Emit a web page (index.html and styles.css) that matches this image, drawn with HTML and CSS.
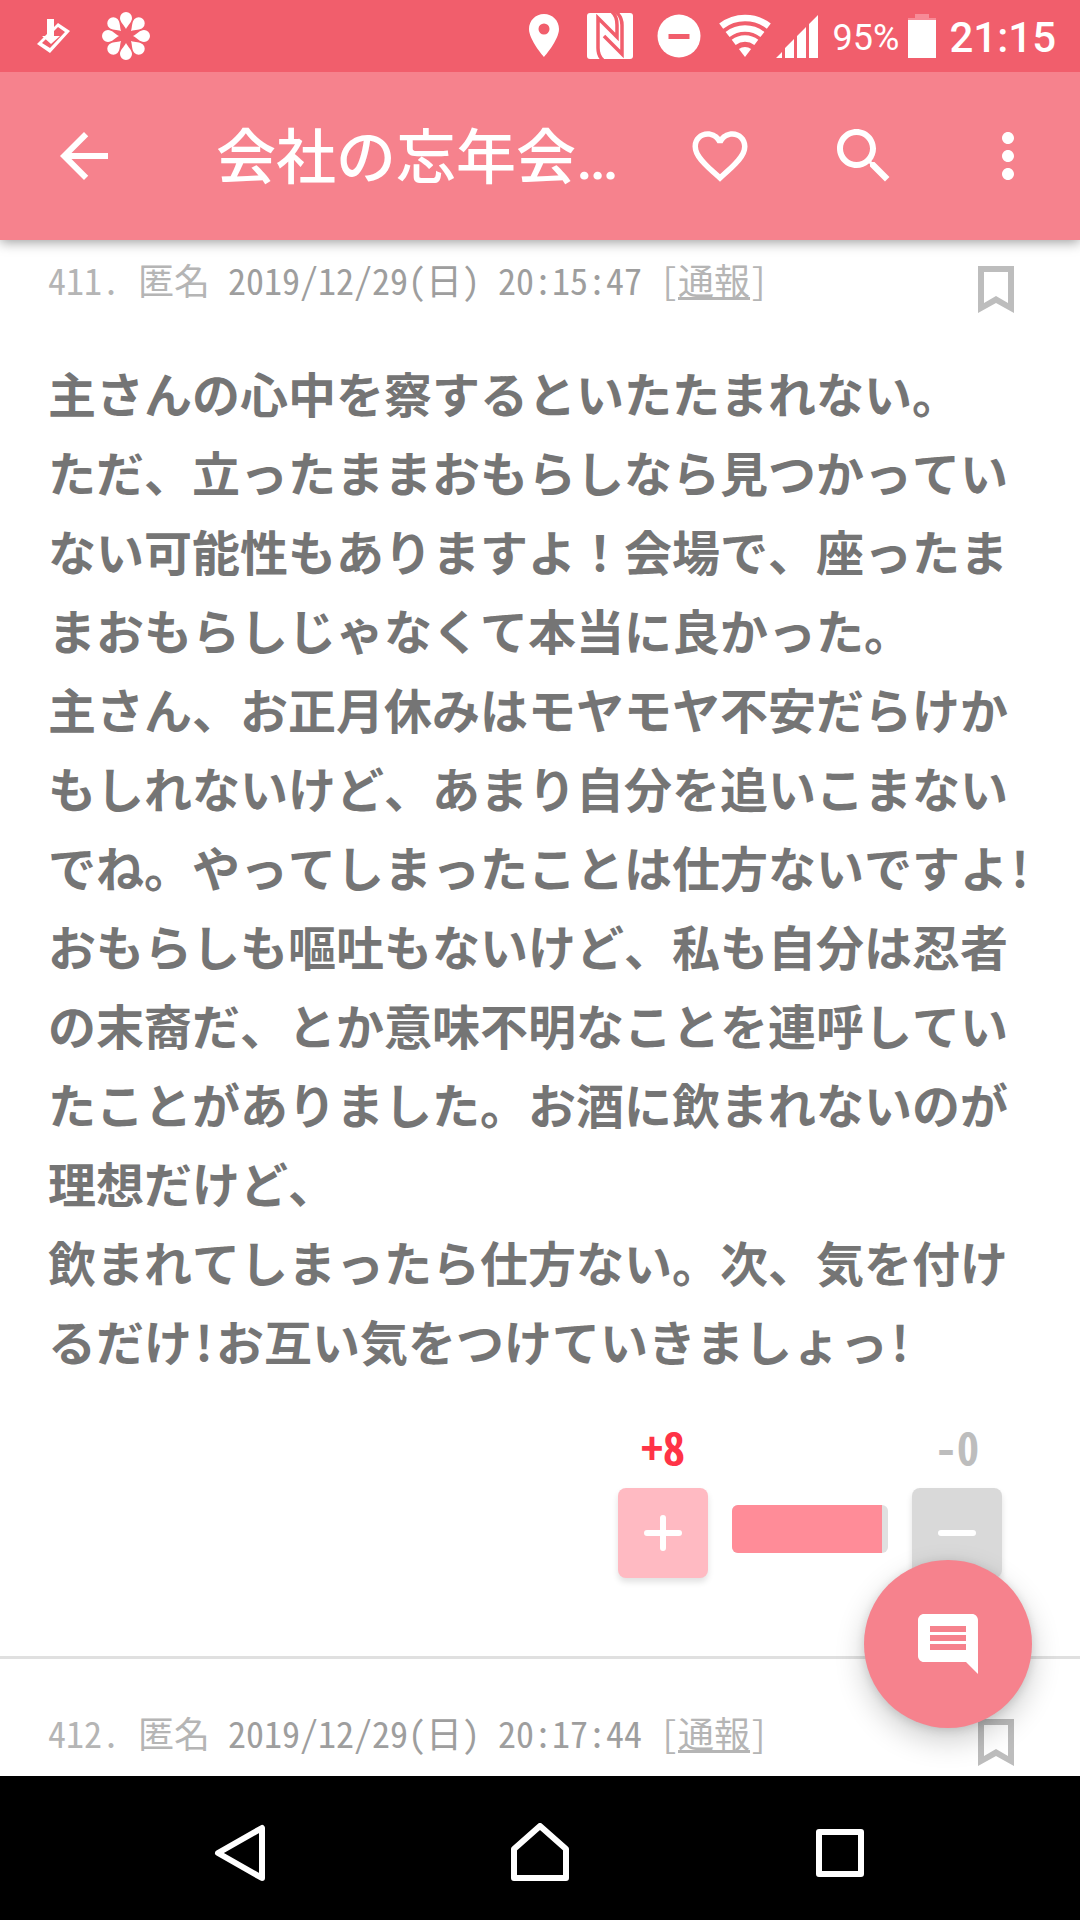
FILE: index.html
```html
<!DOCTYPE html>
<html lang="ja">
<head>
    <meta charset="UTF-8">
    <meta name="viewport" content="width=device-width, initial-scale=1">
    <title>会社の忘年会</title>
    <link rel="stylesheet" href="styles.css">
</head>
<body>
    <div class="status-bar">
        <div class="status-left">
            <svg width="36" height="36" viewBox="0 0 36 36">
                <path d="M22 5l12 8-20 22L1 26zM22 9L6 25l8 5 15-16z" fill="#fff" fill-rule="evenodd"/>
                <path d="M11 1h7v17h6l-9 8-9-8h5z" fill="#fff"/>
            </svg>
            <svg width="48" height="48" viewBox="-24 -24 48 48" fill="#fff">
                <g id="petals">
                    <path id="petal" d="M0-7C-2-11-6-14-6-18a6 6 0 0 1 12 0C6-14 2-11 0-7z"/>
                    <use href="#petal" transform="rotate(45)"/>
                    <use href="#petal" transform="rotate(90)"/>
                    <use href="#petal" transform="rotate(135)"/>
                </g>
                <use href="#petals" transform="rotate(180)"/>
            </svg>
        </div>
        <div class="status-right">
            <svg class="pin" width="30" height="44" viewBox="0 0 30 44">
                <path d="M15 0C6.500 0 0 6.700 0 15c0 11 15 28 15 28s15-17 15-28C30 6.700 23.500 0 15 0zm0 20.500a5.500 5.500 0 1 1 0-11 5.500 5.500 0 0 1 0 11z" fill="#fff"/>
            </svg>
            <svg class="nfc" width="46" height="46" viewBox="0 0 46 46">
                <rect width="46" height="46" rx="3" fill="#fff"/>
                <g fill="none" stroke="#f15e6c">
                    <path d="M16 47Q11 43 11 35V5L30 24V12Q30 3 25-1" stroke-width="3.500"/>
                    <path d="M29-1Q35 4 35 12V41L17 23" stroke-width="3.500"/>
                </g>
            </svg>
            <svg class="dnd" width="44" height="44" viewBox="0 0 44 44">
                <circle cx="22" cy="22" r="21.500" fill="#fff"/>
                <path d="M11.500 22.500h21" stroke="#f15e6c" stroke-width="5"/>
            </svg>
            <svg class="wifi" width="52" height="44" viewBox="-26 -43 52 44">
                <g fill="none" stroke="#fff" stroke-width="6.500">
                    <path d="M-23.800-30.900A39 39 0 0 1 23.800-30.900"/>
                    <path d="M-17.400-22.500A28.500 28.500 0 0 1 17.400-22.500"/>
                    <path d="M-11.300-14.600A18.500 18.500 0 0 1 11.300-14.600"/>
                </g>
                <path d="M0 0L-6.100-7.900A10 10 0 0 1 6.100-7.900z" fill="#fff"/>
            </svg>
            <svg class="signal" width="42" height="43" viewBox="0 0 42 43" fill="#fff">
                <path d="M0 43l6-6v6zM9 33l9-9v19H9zM21 21l9-9v31h-9zM33 9l9-9v43h-9z"/>
            </svg>
            <span class="battery-text">95%</span>
            <svg class="battery" width="28" height="44" viewBox="0 0 28 44">
                <path d="M7 0h14v4h7v3H0V4h7z" fill="#f78b97"/>
                <path d="M0 6h28v38H0z" fill="#fff"/>
            </svg>
            <span class="clock">21:15</span>
        </div>
    </div>

    <header class="app-bar">
        <button class="icon-btn" aria-label="戻る">
            <svg width="72" height="72" viewBox="0 0 24 24"><path d="M20 11H7.830l5.590-5.590L12 4l-8 8 8 8 1.410-1.410L7.830 13H20v-2z"/></svg>
        </button>
        <h1 class="title">会社の忘年会…</h1>
        <button class="icon-btn" aria-label="お気に入り">
            <svg width="66" height="66" viewBox="0 0 24 24"><path d="M16.500 3c-1.740 0-3.410.810-4.500 2.090C10.910 3.810 9.240 3 7.500 3 4.420 3 2 5.420 2 8.500c0 3.780 3.400 6.860 8.550 11.540L12 21.350l1.450-1.320C18.600 15.360 22 12.280 22 8.500 22 5.420 19.580 3 16.500 3zm-4.400 15.550l-.1.100-.1-.1C7.140 14.240 4 11.390 4 8.500 4 6.500 5.500 5 7.500 5c1.540 0 3.040.990 3.570 2.360h1.870C13.460 5.990 14.960 5 16.500 5c2 0 3.500 1.500 3.500 3.500 0 2.890-3.140 5.740-7.900 10.050z"/></svg>
        </button>
        <button class="icon-btn" aria-label="検索">
            <svg width="72" height="72" viewBox="0 0 24 24"><path d="M15.500 14h-.790l-.280-.270C15.410 12.590 16 11.110 16 9.500 16 5.910 13.090 3 9.500 3S3 5.910 3 9.500 5.910 16 9.500 16c1.610 0 3.090-.590 4.230-1.570l.270.280v.790l5 4.990L20.490 19l-4.990-5zm-6 0C7.010 14 5 11.990 5 9.500S7.010 5 9.500 5 14 7.010 14 9.500 11.990 14 9.500 14z"/></svg>
        </button>
        <button class="icon-btn" aria-label="メニュー">
            <svg width="72" height="72" viewBox="0 0 24 24"><path d="M12 8c1.100 0 2-.9 2-2s-.9-2-2-2-2 .9-2 2 .9 2 2 2zm0 2c-1.100 0-2 .9-2 2s.9 2 2 2 2-.9 2-2-.9-2-2-2zm0 6c-1.100 0-2 .9-2 2s.9 2 2 2 2-.9 2-2-.9-2-2-2z"/></svg>
        </button>
    </header>

    <main class="thread">
        <article class="post">
            <div class="post-head">
                <div class="meta">411. 匿名 <span class="date">2019/12/29(日) 20:15:47</span> [<a href="#">通報</a>]</div>
                <button class="bookmark" aria-label="ブックマーク">
                    <svg width="36" height="47" viewBox="0 0 36 47"><path d="M0 0h36v47L18 37 0 47zM6 6v31l12-7 12 7V6z" fill-rule="evenodd"/></svg>
                </button>
            </div>
            <p class="comment">主さんの心中を察するといたたまれない。<br>
                ただ、立ったままおもらしなら見つかっていない可能性もありますよ！会場で、座ったままおもらしじゃなくて本当に良かった。<br>
                主さん、お正月休みはモヤモヤ不安だらけかもしれないけど、あまり自分を追いこまないでね。やってしまったことは仕方ないですよ<span class="half">!</span><br>
                おもらしも嘔吐もないけど、私も自分は忍者の末裔だ、とか意味不明なことを連呼していたことがありました。お酒に飲まれないのが理想だけど、<br>
                飲まれてしまったら仕方ない。次、気を付け<span class="half">るだけ!お互い気をつけていきましょっ!</span></p>
            <div class="votes">
                <div class="vote">
                    <span class="count plus">+8</span>
                    <button class="vote-btn vote-plus" aria-label="プラス">
                        <svg width="38" height="38" viewBox="0 0 38 38"><path d="M3 19h32M19 4v30"/></svg>
                    </button>
                </div>
                <div class="bar"><div class="bar-fill" style="width: 96%"></div></div>
                <div class="vote">
                    <span class="count minus">-0</span>
                    <button class="vote-btn vote-minus" aria-label="マイナス">
                        <svg width="38" height="38" viewBox="0 0 38 38"><path d="M3 19h32"/></svg>
                    </button>
                </div>
            </div>
        </article>

        <article class="post">
            <div class="post-head">
                <div class="meta">412. 匿名 <span class="date">2019/12/29(日) 20:17:44</span> [<a href="#">通報</a>]</div>
                <button class="bookmark" aria-label="ブックマーク">
                    <svg width="36" height="47" viewBox="0 0 36 47"><path d="M0 0h36v47L18 37 0 47zM6 6v31l12-7 12 7V6z" fill-rule="evenodd"/></svg>
                </button>
            </div>
        </article>

        <button class="fab" aria-label="コメントする">
            <svg width="72" height="72" viewBox="0 0 24 24"><path d="M21.990 4c0-1.100-.890-2-1.990-2H4c-1.100 0-2 .9-2 2v12c0 1.100.9 2 2 2h14l4 4-.010-18zM18 14H6v-2h12v2zm0-3H6V9h12v2zm0-3H6V6h12v2z"/></svg>
        </button>
    </main>

    <nav class="nav-bar">
        <button aria-label="戻る">
            <svg width="60" height="60" viewBox="0 0 60 60"><path d="M52 5v50L8 30z"/></svg>
        </button>
        <button aria-label="ホーム">
            <svg width="60" height="60" viewBox="0 0 60 60"><path d="M30 3L4 26v29h52V26z"/></svg>
        </button>
        <button aria-label="アプリ履歴">
            <svg width="60" height="60" viewBox="0 0 60 60"><path d="M9 9h42v42H9z"/></svg>
        </button>
    </nav>
</body>
</html>
```

FILE: styles.css
```css
* { box-sizing: border-box; }

body {
    margin: 0;
    min-height: 100vh;
    display: flex;
    flex-direction: column;
    background: #fff;
    font-family: "Noto Sans CJK JP", sans-serif;
}

button {
    padding: 0;
    border: 0;
    background: none;
    cursor: pointer;
}
svg { display: block; }

/* status bar */
.status-bar {
    position: relative;
    z-index: 2;
    height: 72px;
    padding: 0 24px 0 36px;
    display: flex;
    align-items: center;
    justify-content: space-between;
    background: #f15e6c;
    color: #fff;
    font-family: Roboto, sans-serif;
}
.status-left { display: flex; align-items: center; gap: 30px; }
.status-right { display: flex; align-items: center; }
.pin { margin-right: 28px; }
.nfc { margin-right: 24px; }
.dnd { margin-right: 18px; }
.wifi { margin-right: 5px; }
.signal { margin-right: 15px; }
.battery-text { font-size: 36px; margin-right: 9px; padding-top: 3px; }
.battery { margin-right: 13px; }
.clock { font-size: 42px; font-weight: 500; padding-top: 3px; }

/* app bar */
.app-bar {
    position: relative;
    z-index: 1;
    height: 168px;
    padding-left: 12px;
    display: flex;
    align-items: center;
    background: #f6828d;
    box-shadow: 0 2px 12px rgba(0,0,0,0.4);
}
.icon-btn {
    width: 144px;
    height: 144px;
    display: flex;
    align-items: center;
    justify-content: center;
    fill: #fff;
}
.title {
    flex: 1;
    margin: 0;
    padding: 6px 0 0 60px;
    color: #fff;
    font-family: Roboto, "Noto Sans CJK JP", sans-serif;
    font-size: 60px;
    font-weight: 500;
    line-height: 84px;
    white-space: nowrap;
}

/* posts */
.thread {
    position: relative;
    flex: 1;
}
.post { padding: 49px 36px 0 48px; }
.post:first-child {
    padding-top: 15px;
    padding-bottom: 78px;
    border-bottom: 3px solid #e0e0e0;
}
.post-head {
    display: flex;
    justify-content: space-between;
    align-items: flex-start;
    padding-right: 30px;
}
.meta {
    color: #b5b5b5;
    font-size: 36px;
    line-height: 48px;
    font-feature-settings: "hwid";
}
.meta a { color: inherit; text-underline-offset: 2px; }
.date { color: #9e9e9e; }
.bookmark { padding-top: 11px; fill: #bdbdbd; }
.comment {
    margin: 40px 0 0;
    color: #757575;
    font-size: 48px;
    font-weight: 700;
    line-height: 79px;
    line-break: anywhere;
    font-kerning: none;
}
.half { font-feature-settings: "hwid"; }

/* votes */
.votes {
    display: flex;
    justify-content: flex-end;
    align-items: flex-end;
    gap: 24px;
    margin-top: 36px;
    padding-right: 42px;
}
.vote {
    display: flex;
    flex-direction: column;
    align-items: center;
    gap: 12px;
}
.count {
    font-size: 44px;
    font-weight: 700;
    line-height: 60px;
    font-feature-settings: "hwid";
}
.plus { color: #ff3347; }
.minus { color: #bdbdbd; }
.vote-btn {
    width: 90px;
    height: 90px;
    display: flex;
    align-items: center;
    justify-content: center;
    border-radius: 8px;
    box-shadow: 0 4px 6px rgba(0,0,0,0.12);
    stroke: #fff;
    stroke-width: 6px;
    stroke-linecap: round;
}
.vote-plus { background: #ffbac2; }
.vote-minus { background: #d9d9d9; }
.bar {
    width: 156px;
    height: 48px;
    margin-bottom: 25px;
    border-radius: 6px;
    background: #e0e0e0;
    overflow: hidden;
}
.bar-fill { height: 100%; background: #ff8c98; }

.fab {
    position: absolute;
    right: 48px;
    bottom: 48px;
    width: 168px;
    height: 168px;
    display: flex;
    align-items: center;
    justify-content: center;
    border-radius: 50%;
    background: #f6828d;
    box-shadow: 0 12px 30px rgba(0,0,0,0.2), 0 2px 10px rgba(0,0,0,0.12);
    fill: #fff;
}

/* navigation bar */
.nav-bar {
    position: relative;
    height: 144px;
    padding: 10px 90px 0;
    display: flex;
    background: #000;
}
.nav-bar button {
    flex: 1;
    display: flex;
    align-items: center;
    justify-content: center;
    fill: none;
    stroke: #fff;
    stroke-width: 6px;
    stroke-linejoin: round;
}
```
